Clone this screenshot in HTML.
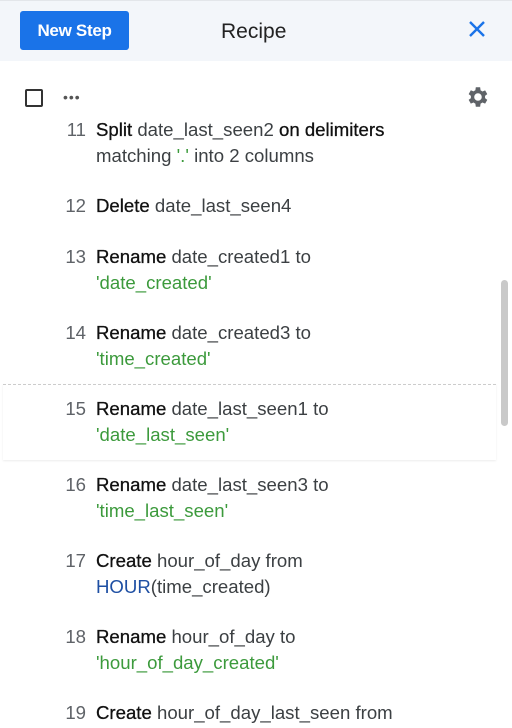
<!DOCTYPE html>
<html><head><style>
*{margin:0;padding:0;box-sizing:border-box}
body{width:512px;height:728px;overflow:hidden;background:#fff;font-family:"Liberation Sans",sans-serif;position:relative}
.hdr{position:absolute;left:0;top:0;width:512px;height:61px;background:#f3f6fa;border-top:1px solid #e3e6ea}
.btn{position:absolute;left:20px;top:10px;width:109px;height:39px;background:#1a73e8;border-radius:3px;color:#fff;font-weight:bold;font-size:17px;line-height:39px;text-align:center;letter-spacing:-0.3px}
.title{position:absolute;left:221px;top:19px;font-size:21px;color:#222}
.x{position:absolute;left:466px;top:17px}
.cb{position:absolute;left:25px;top:89px;width:18px;height:18px;border:2px solid #333;border-radius:2px}
.dots{position:absolute;left:63px;top:89px;font-size:14px;color:#555;letter-spacing:1px}
.gear{position:absolute;left:464px;top:84px}
.item{position:absolute;left:0;font-size:18.6px;line-height:26px;color:#3c4043}
.n{position:absolute;left:60px;width:26px;text-align:right;color:#5f6368}
.t{position:absolute;left:96px;white-space:nowrap}
b{font-weight:normal;color:#111;-webkit-text-stroke:0.3px #111}
.g{color:#3c9a3c}
.bl{color:#1e4fa3}
.hov{position:absolute;left:3px;top:384px;width:493px;height:76px;background:#fff;border-top:1px dashed #ccc;box-shadow:0 1px 2px rgba(0,0,0,.08)}
.sb{position:absolute;left:501px;top:280px;width:7px;height:146px;background:#c9c9c9;border-radius:4px}
</style></head><body>
<div class="hdr">
<div class="btn">New Step</div>
<div class="title">Recipe</div>
<svg class="x" width="22" height="22" viewBox="0 0 22 22"><path d="M4 4L18 18M18 4L4 18" stroke="#1a73e8" stroke-width="2.4"/></svg>
</div>
<div class="cb"></div>
<div class="dots">•••</div>
<svg class="gear" width="26" height="26" viewBox="0 0 24 24"><path fill="#5f6368" d="M19.4 13a7.5 7.5 0 0 0 0-2l2.1-1.6-2-3.5-2.5 1a7.4 7.4 0 0 0-1.7-1L14.9 3h-4l-.4 2.8a7.4 7.4 0 0 0-1.7 1l-2.5-1-2 3.5L6.4 11a7.5 7.5 0 0 0 0 2l-2.1 1.6 2 3.5 2.5-1a7.4 7.4 0 0 0 1.7 1l.4 2.9h4l.4-2.9a7.4 7.4 0 0 0 1.7-1l2.5 1 2-3.5zM12.9 15.5a3.5 3.5 0 1 1 0-7 3.5 3.5 0 0 1 0 7z"/></svg>
<div class="hov"></div>
<div class="sb"></div>
<div class="item" style="top:117px"><span class="n">11</span><span class="t"><b>Split</b> date_last_seen2 <b>on delimiters</b><br>matching <span class="g">'.'</span> into 2 columns</span></div>
<div class="item" style="top:193px"><span class="n">12</span><span class="t"><b>Delete</b> date_last_seen4</span></div>
<div class="item" style="top:244px"><span class="n">13</span><span class="t"><b>Rename</b> date_created1 to<br><span class="g">'date_created'</span></span></div>
<div class="item" style="top:320px"><span class="n">14</span><span class="t"><b>Rename</b> date_created3 to<br><span class="g">'time_created'</span></span></div>
<div class="item" style="top:396px"><span class="n">15</span><span class="t"><b>Rename</b> date_last_seen1 to<br><span class="g">'date_last_seen'</span></span></div>
<div class="item" style="top:472px"><span class="n">16</span><span class="t"><b>Rename</b> date_last_seen3 to<br><span class="g">'time_last_seen'</span></span></div>
<div class="item" style="top:548px"><span class="n">17</span><span class="t"><b>Create</b> hour_of_day from<br><span class="bl">HOUR</span>(time_created)</span></div>
<div class="item" style="top:624px"><span class="n">18</span><span class="t"><b>Rename</b> hour_of_day to<br><span class="g">'hour_of_day_created'</span></span></div>
<div class="item" style="top:700px"><span class="n">19</span><span class="t"><b>Create</b> hour_of_day_last_seen from</span></div>
</body></html>
